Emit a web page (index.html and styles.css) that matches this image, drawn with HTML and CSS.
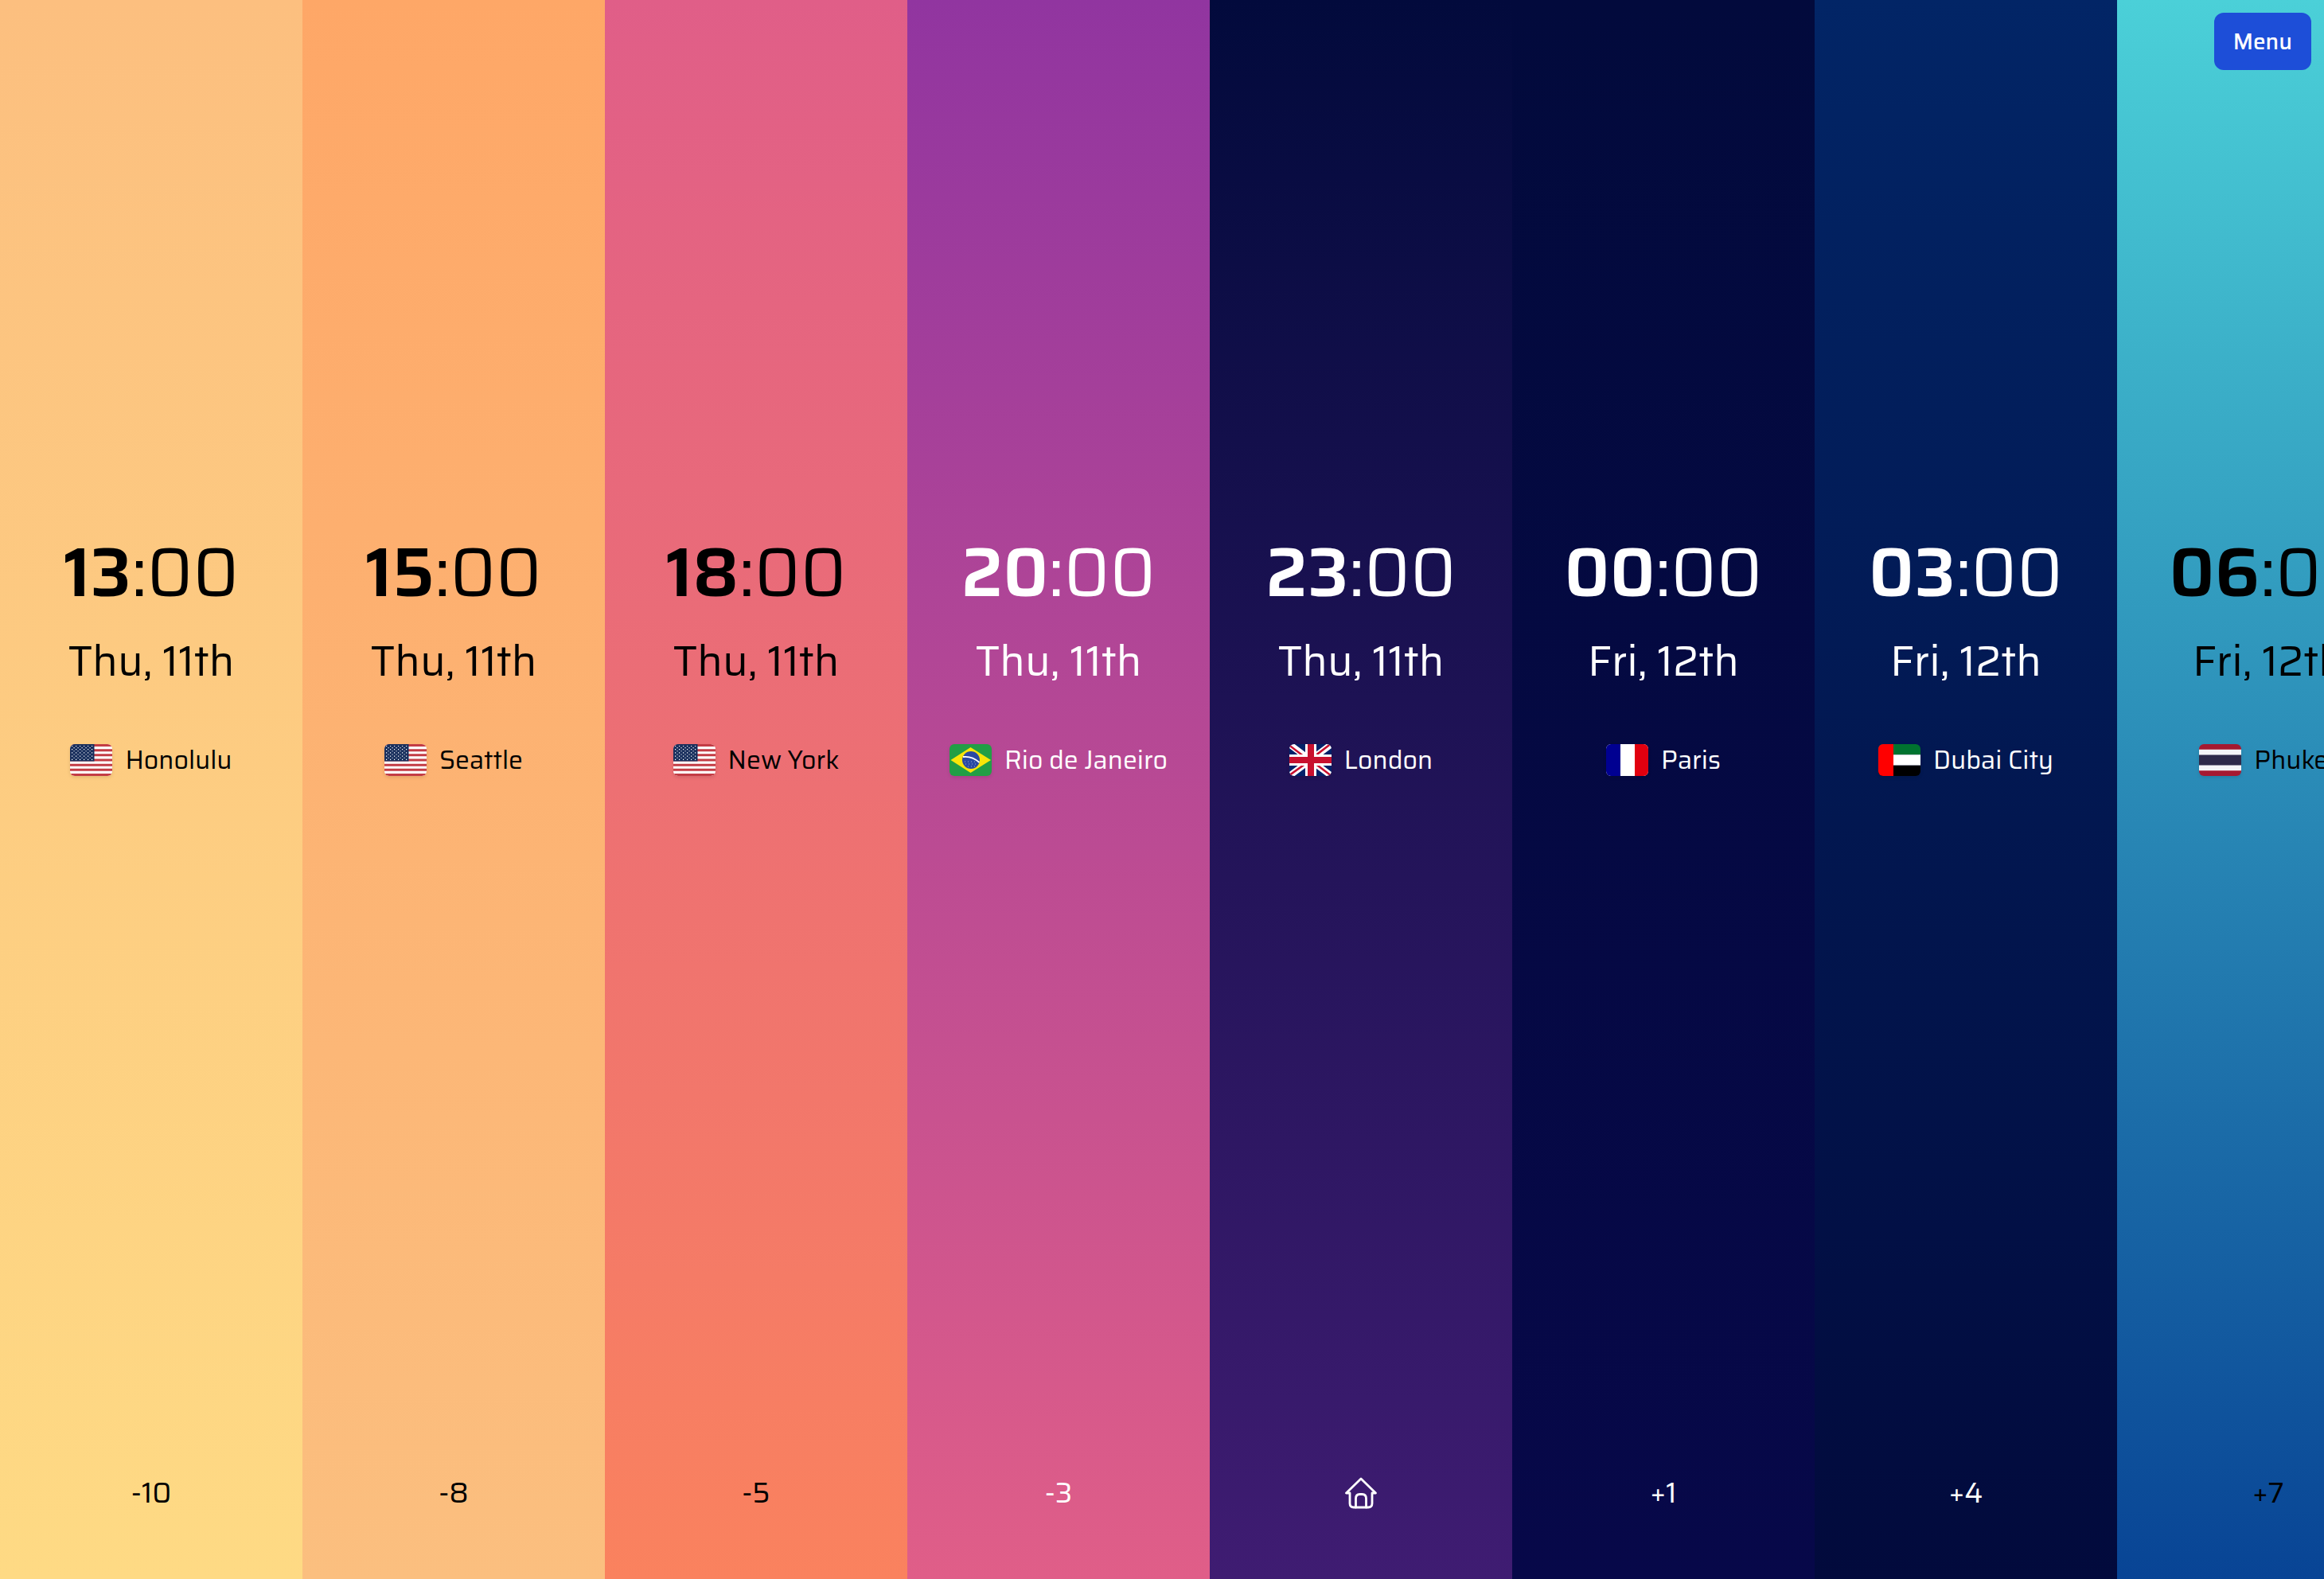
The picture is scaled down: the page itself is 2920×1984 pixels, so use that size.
FILE: index.html
```html
<!DOCTYPE html>
<html lang="en">
<head>
<meta charset="utf-8">
<meta name="viewport" content="width=device-width, initial-scale=1">
<title>World clocks</title>
<link rel="stylesheet" href="styles.css">
</head>
<body>
<svg class="defs" aria-hidden="true">
  <defs>
    <symbol id="flag-us" viewBox="0 0 53 40" preserveAspectRatio="none">
      <path fill="#fff" d="M0 0h53v40H0z"/>
      <path stroke="#c33c45" stroke-width="3.1" d="M0 1.5h53M0 7.7h53M0 13.8h53M0 20h53M0 26.2h53M0 32.3h53M0 38.5h53"/>
      <path fill="#192f5d" d="M0 0h30.5v21.5H0z"/>
      <path stroke="#fff" stroke-width="1.2" stroke-dasharray="1.2 3.8" d="M2 2.5h27M2 6.7h27M2 10.9h27M2 15.1h27M2 19.3h27"/>
      <path stroke="#fff" stroke-width="1.1" stroke-dasharray="1.1 3.9" d="M4.500 4.600h23M4.500 8.800h23M4.500 13h23M4.500 17.200h23"/>
    </symbol>
    <symbol id="flag-br" viewBox="0 0 53 40">
      <path fill="#229e45" d="M0 0h53v40H0z"/>
      <path fill="#f8e509" d="M26.500 36 1.500 20l25-16 25.500 16z"/>
      <circle cx="27" cy="20" r="11" fill="#2b49a3"/>
      <path fill="none" stroke="#fff" stroke-width="1.800" d="M17 16c8-1 15 2 20.500 7"/>
      <path stroke="#b9c4e4" stroke-width=".8" stroke-dasharray="1 3" d="M19 22h16M20 25h13M23 28h9"/>
    </symbol>
    <symbol id="flag-gb" viewBox="0 0 53 40">
      <path fill="#012169" d="M0 0h53v40H0z"/>
      <path stroke="#fff" stroke-width="8" d="m0 0 53 40M53 0 0 40"/>
      <path fill="#c8102e" d="m0 37.500 17.500-12.500H22L1 40H0zM0 0l18.500 14v.5H15L0 3zM31 14 49.500 0H53v.5L35.500 14zM31 25h4.500L53 38.500V40h-2z"/>
      <path stroke="#fff" stroke-width="14" d="M27 0v40M0 20h53"/>
      <path stroke="#c8102e" stroke-width="8" d="M27 0v40M0 20h53"/>
    </symbol>
    <symbol id="flag-fr" viewBox="0 0 53 40">
      <path fill="#fff" d="M0 0h53v40H0z"/>
      <path fill="#000091" d="M0 0h18v40H0z"/>
      <path fill="#e1000f" d="M36 0h17v40H36z"/>
    </symbol>
    <symbol id="flag-ae" viewBox="0 0 53 40">
      <path fill="#00732f" d="M0 0h53v13.300H0z"/>
      <path fill="#fff" d="M0 13.300h53v13.400H0z"/>
      <path d="M0 26.700h53V40H0z"/>
      <path fill="#f00" d="M0 0h19v40H0z"/>
    </symbol>
    <symbol id="flag-th" viewBox="0 0 53 40">
      <path fill="#a51931" d="M0 0h53v40H0z"/>
      <path fill="#f4f5f8" d="M0 6.700h53v26.600H0z"/>
      <path fill="#2d2a4a" d="M0 13.500h53v13H0z"/>
    </symbol>
  </defs>
</svg>

<main class="clocks">
  <section class="clock afternoon">
    <div class="info">
      <time class="time"><b>13</b>:00</time>
      <p class="date">Thu, 11th</p>
      <h2 class="city"><svg class="flag"><use href="#flag-us"/></svg>Honolulu</h2>
    </div>
    <p class="offset">-10</p>
  </section>
  <section class="clock late-afternoon">
    <div class="info">
      <time class="time"><b>15</b>:00</time>
      <p class="date">Thu, 11th</p>
      <h2 class="city"><svg class="flag"><use href="#flag-us"/></svg>Seattle</h2>
    </div>
    <p class="offset">-8</p>
  </section>
  <section class="clock sunset">
    <div class="info">
      <time class="time"><b>18</b>:00</time>
      <p class="date">Thu, 11th</p>
      <h2 class="city"><svg class="flag"><use href="#flag-us"/></svg>New York</h2>
    </div>
    <p class="offset">-5</p>
  </section>
  <section class="clock dusk light-text">
    <div class="info">
      <time class="time"><b>20</b>:00</time>
      <p class="date">Thu, 11th</p>
      <h2 class="city"><svg class="flag"><use href="#flag-br"/></svg>Rio de Janeiro</h2>
    </div>
    <p class="offset">-3</p>
  </section>
  <section class="clock late-evening light-text">
    <div class="info">
      <time class="time"><b>23</b>:00</time>
      <p class="date">Thu, 11th</p>
      <h2 class="city"><svg class="flag"><use href="#flag-gb"/></svg>London</h2>
    </div>
    <p class="offset">
      <svg class="home" viewBox="0 0 40 40" role="img" aria-label="Home">
        <path d="M6 20v13q0 5 5 5h18q5 0 5-5V20h4.500L20 2 1.500 20H6"/>
        <path d="M13.500 38V27q0-5.500 5-5.500h3q5 0 5 5.500v11"/>
      </svg>
    </p>
  </section>
  <section class="clock midnight light-text">
    <div class="info">
      <time class="time"><b>00</b>:00</time>
      <p class="date">Fri, 12th</p>
      <h2 class="city"><svg class="flag"><use href="#flag-fr"/></svg>Paris</h2>
    </div>
    <p class="offset">+1</p>
  </section>
  <section class="clock before-dawn light-text">
    <div class="info">
      <time class="time"><b>03</b>:00</time>
      <p class="date">Fri, 12th</p>
      <h2 class="city"><svg class="flag"><use href="#flag-ae"/></svg>Dubai City</h2>
    </div>
    <p class="offset">+4</p>
  </section>
  <section class="clock dawn">
    <div class="info">
      <time class="time"><b>06</b>:00</time>
      <p class="date">Fri, 12th</p>
      <h2 class="city"><svg class="flag"><use href="#flag-th"/></svg>Phuket</h2>
    </div>
    <p class="offset">+7</p>
  </section>
</main>
<button class="menu-button" type="button">Menu</button>
</body>
</html>
```
FILE: styles.css
```css
* {
  box-sizing: border-box;
}

body {
  margin: 0;
  font-family: Saira, Inter, "Liberation Sans", sans-serif;
  color: #000;
}

p,
h2 {
  margin: 0;
}

.defs {
  display: none;
}

.clocks {
  display: flex;
  min-height: 100vh;
  overflow-x: auto;
  scrollbar-width: none;
}

.clock {
  flex: 1 0 380px;
  display: grid;
  grid-template-rows: 2fr auto 3fr auto;
  justify-items: center;
  padding: 84px 0 88px;
}

.info {
  grid-row: 2;
  display: flex;
  flex-direction: column;
  align-items: center;
  white-space: nowrap;
}

.time {
  font-size: 86px;
  line-height: 96px;
}

.time b {
  font-weight: 600;
}

.date {
  margin-top: 32px;
  font-size: 53px;
  line-height: 64px;
}

.city {
  display: flex;
  align-items: center;
  gap: 16px;
  margin-top: 72px;
  font-size: 32px;
  font-weight: 400;
  line-height: 40px;
}

.flag {
  width: 53px;
  height: 40px;
  border-radius: 6px;
  box-shadow: 0 2px 4px rgb(0 0 0 / 10%);
}

.offset {
  grid-row: 4;
  font-size: 36px;
  line-height: 40px;
}

.home {
  display: block;
  width: 40px;
  height: 40px;
  fill: none;
  stroke: currentColor;
  stroke-width: 2.8;
  stroke-linejoin: round;
  stroke-linecap: round;
}

.light-text {
  color: #fff;
}

.afternoon {
  background: linear-gradient(#fcbf7f, #feda84);
}

.late-afternoon {
  background: linear-gradient(#fea767, #fbbf7f);
}

.sunset {
  background: linear-gradient(#e05e88, #fa825e);
}

.dusk {
  background: linear-gradient(#9135a0, #e05e88);
}

.late-evening {
  background: linear-gradient(#020a3c, #3f1c72);
}

.midnight {
  background: linear-gradient(#020a3c, #070849);
}

.before-dawn {
  background: linear-gradient(#022566, #020a3c);
}

.dawn {
  background: linear-gradient(#4bd0d8, #084495);
}

.menu-button {
  position: fixed;
  top: 16px;
  right: 16px;
  padding: 16px 24px;
  border: 0;
  border-radius: 12px;
  background: #1d4ed8;
  color: #fff;
  font: 500 28px/40px Saira, Inter, "Liberation Sans", sans-serif;
}
```
